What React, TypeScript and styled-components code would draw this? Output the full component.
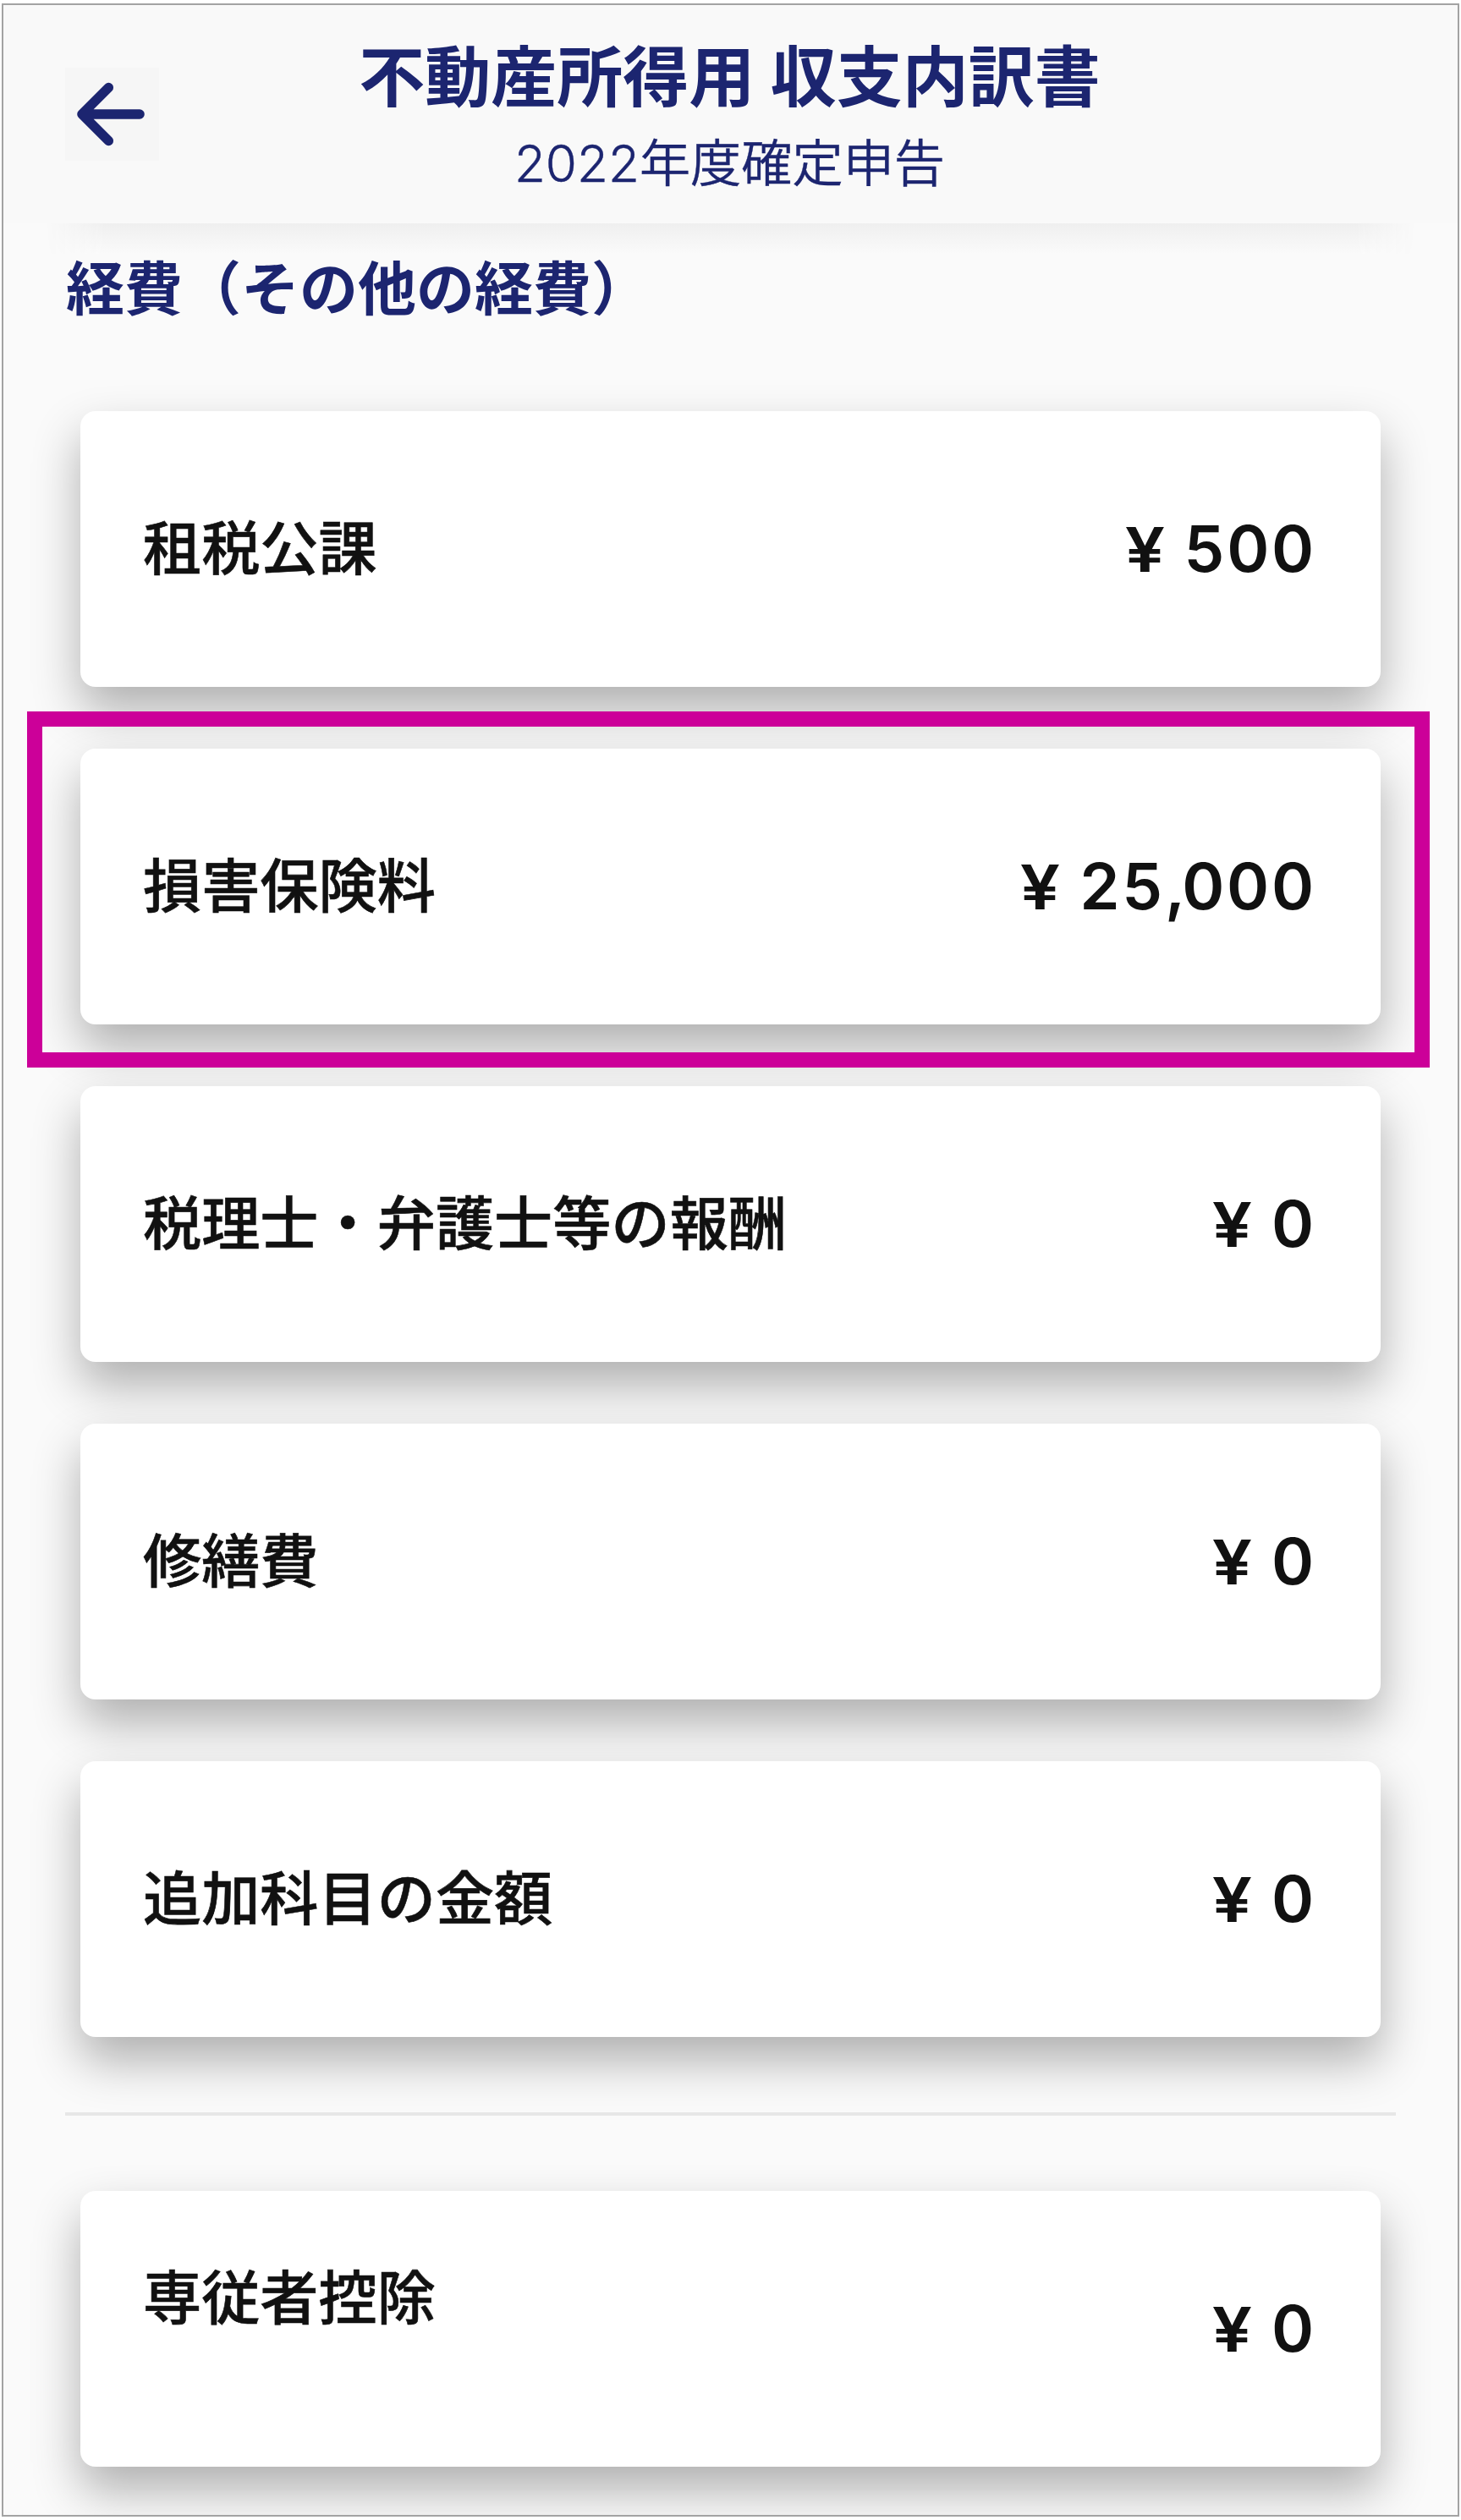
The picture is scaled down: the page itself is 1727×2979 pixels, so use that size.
import React from 'react';
import styled, { createGlobalStyle } from 'styled-components';

const GlobalStyle = createGlobalStyle`
  * {
    box-sizing: border-box;
  }

  body {
    margin: 0;
    background: #ffffff;
    font-family: 'Inter', 'Noto Sans CJK JP', sans-serif;
  }
`;

const Screen = styled.div`
  width: 1723px;
  height: 2971px;
  margin: 4px 0 0 2px;
  border: 2px solid #a3a3a3;
  background: #fafafa;
  overflow: hidden;
`;

const Header = styled.header`
  display: grid;
  grid-template-columns: 111px 1fr 111px;
  height: 258px;
  padding: 0 75px 0 73px;
  background: #f9f9f9;
`;

const BackButton = styled.button`
  display: flex;
  align-items: center;
  justify-content: center;
  width: 111px;
  height: 110px;
  margin: 74px 0 0;
  padding: 0 4px 0 0;
  border: none;
  background: #f6f6f6;
  color: #1c2570;
`;

const BackIcon = styled.svg`
  flex: none;
  width: 112px;
  height: 112px;
`;

const Titles = styled.div`
  display: flex;
  flex-direction: column;
  align-items: center;
  color: #1c2570;
  white-space: nowrap;
`;

const Title = styled.h1`
  margin: 36px 0 0;
  font-size: 78px;
  line-height: 100px;
  font-weight: 700;
`;

const SubTitle = styled.p`
  margin: 6px 0 0;
  font-size: 60.2px;
  line-height: 92px;
  font-weight: 350;
  -webkit-text-stroke: 0.4px #1c2570;
`;

const HeaderShadow = styled.div`
  height: 36px;
  margin: 0 50px;
  background: linear-gradient(#efefef, #fafafa);
  mask-image: linear-gradient(
    90deg,
    transparent,
    #000 70px,
    #000 calc(100% - 70px),
    transparent
  );
`;

const SectionTitle = styled.h2`
  margin: -8px 0 0 74px;
  font-size: 69px;
  line-height: 100px;
  font-weight: 700;
  color: #1c2570;
`;

const CardList = styled.div`
  display: flex;
  flex-direction: column;
  gap: 73px;
  margin: 0 91px;
`;

const Card = styled.div`
  position: relative;
  display: flex;
  align-items: center;
  justify-content: space-between;
  height: 326px;
  padding: 0 76px 0 74px;
  border-radius: 18px;
  background: #ffffff;
  box-shadow: 0 28px 56px rgba(0, 0, 0, 0.3);
`;

const Label = styled.span<{ $raised?: boolean }>`
  font-size: 69.2px;
  line-height: 100px;
  font-weight: 500;
  color: #111111;
  -webkit-text-stroke: 0.6px #111111;
  margin-bottom: ${(props) => (props.$raised ? '72px' : '0')};
`;

const Amount = styled.span`
  margin-bottom: 1px;
  font-size: 76px;
  line-height: 100px;
  font-weight: 630;
  letter-spacing: 2.8px;
  color: #111111;
`;

const Yen = styled.span`
  display: inline-block;
  margin-right: 1px;
  font-size: 73px;
  font-weight: 600;
  transform: scaleX(1.15);
`;

const Comma = styled.span`
  letter-spacing: -4px;
`;

const Highlight = styled.div`
  position: absolute;
  top: -44px;
  right: -58px;
  bottom: -51px;
  left: -63px;
  border: 18px solid #cc0099;
  z-index: 1;
`;

const Divider = styled.hr`
  height: 4px;
  margin: 89px 73px;
  border: none;
  background: #e7e7e7;
`;

const Expenses = styled.section`
  padding-top: 94px;
`;

interface Expense {
  label: string;
  amount: string;
  selected?: boolean;
}

const expenses: Expense[] = [
  { label: '租税公課', amount: '500' },
  { label: '損害保険料', amount: '25,000', selected: true },
  { label: '税理士・弁護士等の報酬', amount: '0' },
  { label: '修繕費', amount: '0' },
  { label: '追加科目の金額', amount: '0' },
];

function ExpenseCard(props: Expense & { raised?: boolean }) {
  const { label, amount, selected, raised } = props;
  const groups = amount.split(',');

  return (
    <Card>
      <Label $raised={raised}>{label}</Label>
      <Amount>
        <Yen>¥</Yen>{' '}
        {groups.map((group, i) => (
          <React.Fragment key={i}>
            {i > 0 && <Comma>,</Comma>}
            {group}
          </React.Fragment>
        ))}
      </Amount>
      {selected && <Highlight />}
    </Card>
  );
}

export default function App() {
  return (
    <>
      <GlobalStyle />
      <Screen lang="ja">
        <Header>
          <BackButton aria-label="戻る">
            <BackIcon viewBox="0 0 512 512">
              <path
                d="M244 400L100 256l144-144M120 256h292"
                fill="none"
                stroke="currentColor"
                strokeWidth="52"
                strokeLinecap="round"
                strokeLinejoin="round"
              />
            </BackIcon>
          </BackButton>
          <Titles>
            <Title>不動産所得用 収支内訳書</Title>
            <SubTitle>2022年度確定申告</SubTitle>
          </Titles>
        </Header>
        <HeaderShadow />
        <SectionTitle>経費（その他の経費）</SectionTitle>
        <Expenses>
          <CardList>
            {expenses.map((expense) => (
              <ExpenseCard key={expense.label} {...expense} />
            ))}
          </CardList>
          <Divider />
          <CardList>
            <ExpenseCard label="専従者控除" amount="0" raised />
          </CardList>
        </Expenses>
      </Screen>
    </>
  );
}
